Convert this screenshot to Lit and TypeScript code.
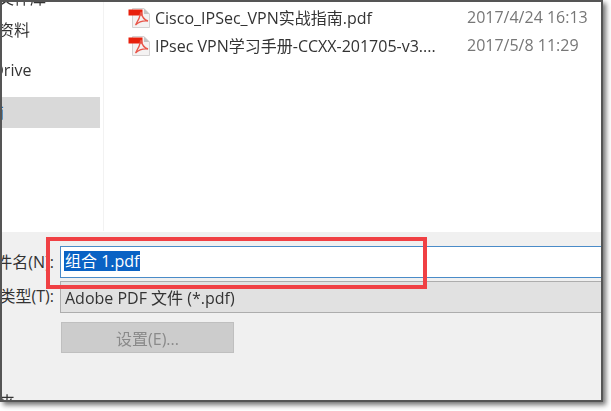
import { LitElement, html, css, svg } from "lit";
import { customElement } from "lit/decorators.js";

const files = [
  { name: "Cisco_IPSec_VPN实战指南.pdf", date: "2017/4/24 16:13" },
  { name: "IPsec VPN学习手册-CCXX-201705-v3....", date: "2017/5/8 11:29" },
];

const pdfIcon = svg`
  <svg class="icon" width="23" height="20" viewBox="0 0 23 20">
    <path d="M4.5 0.5H16L21.5 6V19.5H4.5Z" fill="#f4f2f2" stroke="#d4d2d2"/>
    <path d="M16 0.5V6H21.5Z" fill="#c4c4c4"/>
    <rect x="0.5" y="1.5" width="14" height="6" fill="#e8200c"/>
    <path d="M13 4C12 9 11 12 7.5 17C11 13.5 15 12.5 20 13C16 12 14 9 13 4Z" fill="none" stroke="#e8564a" stroke-width="1.3"/>
  </svg>
`;

@customElement("app-root")
export class AppRoot extends LitElement {
  static styles = css`
    :host {
      display: block;
      width: 611px;
      height: 411px;
      overflow: hidden;
      background: #fff;
      font-family: "Open Sans", "Noto Sans CJK SC", sans-serif;
      font-size: 16px;
      color: #333;
    }

    .shadow {
      width: 603px;
      height: 402px;
      box-shadow: 3px 3px 5px rgba(0, 0, 0, 0.55);
    }

    .window {
      position: relative;
      box-sizing: border-box;
      display: flex;
      flex-direction: column;
      width: 603px;
      height: 402px;
      overflow: hidden;
      border: 2px solid #555;
      background: #fff;
    }

    .browser {
      display: flex;
      flex: none;
      height: 230px;
      overflow: hidden;
      filter: blur(0.35px);
    }

    .sidebar {
      display: flex;
      flex: none;
      flex-direction: column;
      gap: 10px;
      box-sizing: border-box;
      width: 102px;
      height: 256px;
      margin-top: -27px;
      border-right: 1px solid #f2f2f2;
      padding-right: 3px;
    }

    .nav {
      display: flex;
      flex: none;
      align-items: center;
      height: 31px;
      padding-bottom: 3px;
      box-sizing: border-box;
      overflow: hidden;
      white-space: nowrap;
    }

    .nav span {
      flex: none;
    }

    .nav.library {
      margin: 8px 0 -9px;
    }

    .nav.library span,
    .nav.docs span {
      margin-left: -4px;
    }

    .nav.drive span {
      margin-left: -41px;
    }

    .nav.pc {
      background: #d9d9d9;
      color: #1f6fb5;
    }

    .nav.pc span {
      margin-left: -46px;
    }

    .list {
      flex: 1;
      padding: 2px 0 0 24px;
    }

    .file {
      display: flex;
      align-items: center;
      height: 28px;
    }

    .icon {
      flex: none;
      margin-right: 4px;
    }

    .name {
      width: 312px;
      padding-bottom: 2px;
      white-space: nowrap;
    }

    .date {
      padding-bottom: 2px;
      color: #777;
      white-space: nowrap;
    }

    .form {
      flex: 1;
      padding-top: 14px;
      background: #f0f0f0;
      filter: blur(0.35px);
    }

    .row {
      display: flex;
      align-items: center;
    }

    .label {
      display: flex;
      flex: none;
      justify-content: flex-end;
      width: 52px;
      margin-right: 6px;
      padding-bottom: 2px;
      overflow: hidden;
      white-space: nowrap;
    }

    .input {
      flex: 1;
      height: 32px;
      border: solid #4a8bc8;
      border-width: 1px 0 1px 1px;
      padding-left: 3px;
      box-sizing: border-box;
      display: flex;
      align-items: center;
      background: #fff;
    }

    .input span {
      margin-bottom: 2px;
      padding: 0 1px;
      line-height: 20px;
      background: #0a62c4;
      color: #fff;
    }

    .select {
      flex: 1;
      height: 32px;
      margin-top: 3px;
      box-sizing: border-box;
      display: flex;
      align-items: center;
      padding-left: 4px;
      border: solid #adadad;
      border-width: 1px 0 1px 1px;
      background: #e1e1e1;
    }

    .settings {
      display: flex;
      justify-content: center;
      align-items: center;
      box-sizing: border-box;
      width: 173px;
      height: 31px;
      margin: 9px 0 0 59px;
      border: 1px solid #bfbfbf;
      background: #cccccc;
      color: #8a8a8a;
    }

    .hidden-folders {
      margin: 39px 0 0 -3px;
      line-height: 20px;
      white-space: nowrap;
    }

    .mark {
      position: absolute;
      top: 235px;
      left: 44px;
      box-sizing: border-box;
      width: 381px;
      height: 52px;
      border: 4px solid #f04044;
    }
  `;

  render() {
    return html`
      <div class="shadow">
        <div class="window">
          <div class="browser">
            <div class="sidebar">
              <div class="nav library"><span>文件库</span></div>
              <div class="nav docs"><span>资料</span></div>
              <div class="nav drive"><span>OneDrive</span></div>
              <div class="nav pc"><span>此电脑</span></div>
            </div>
            <div class="list">
              ${files.map(
                (f) => html`
                  <div class="file">
                    ${pdfIcon}
                    <span class="name">${f.name}</span>
                    <span class="date">${f.date}</span>
                  </div>
                `,
              )}
            </div>
          </div>
          <div class="form">
            <div class="row">
              <div class="label">文件名(N):</div>
              <div class="input"><span>组合 1.pdf</span></div>
            </div>
            <div class="row">
              <div class="label">保存类型(T):</div>
              <div class="select">Adobe PDF 文件 (*.pdf)</div>
            </div>
            <div class="settings">设置(E)...</div>
            <div class="hidden-folders">夹</div>
          </div>
          <div class="mark"></div>
        </div>
      </div>
    `;
  }
}
